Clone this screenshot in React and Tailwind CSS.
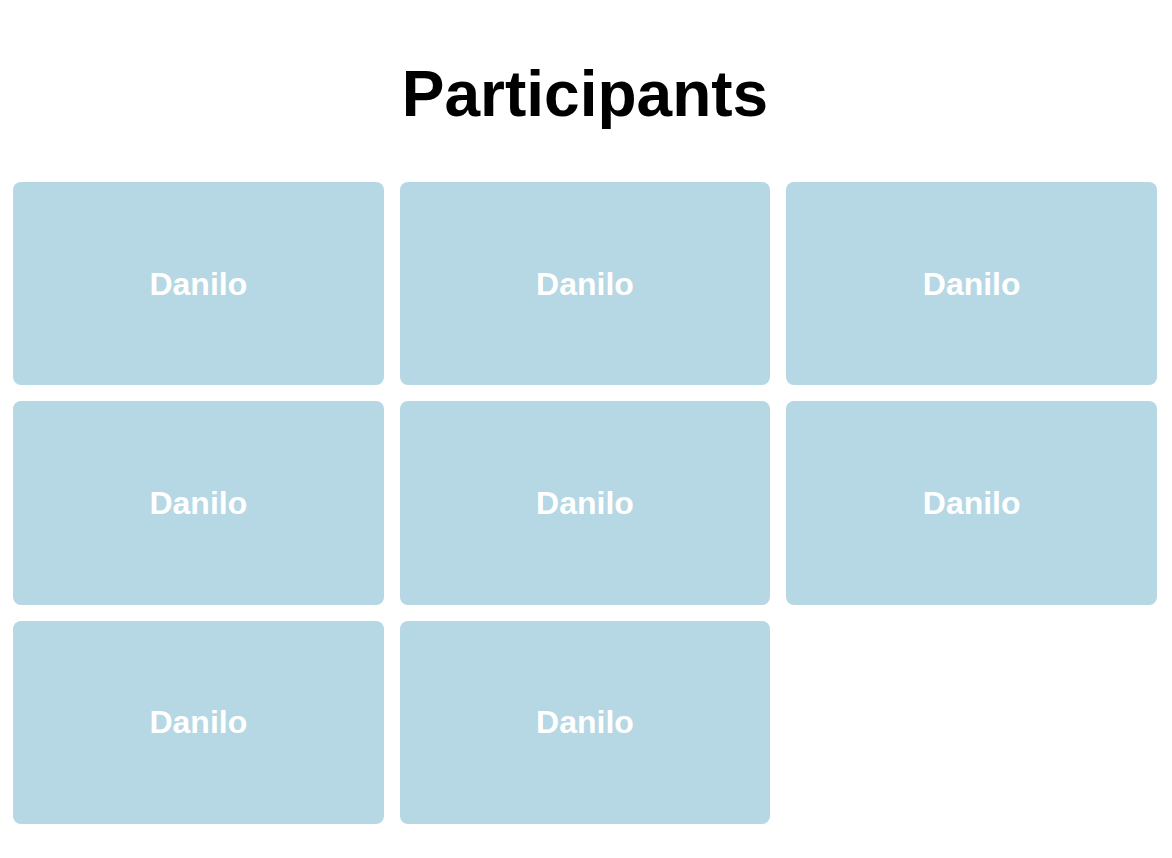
const participants = Array.from({ length: 8 }, (_, id) => ({ id, name: "Danilo" }));

function ParticipantCard({ name }) {
  return (
    <li className="flex items-center justify-center rounded-lg bg-[#b6d7e4] text-[32px] leading-9 font-bold text-white">
      {name}
    </li>
  );
}

export default function App() {
  return (
    <main className="flex min-h-screen flex-col pt-14 pr-[15px] pb-[34px] pl-[13px] font-['Liberation_Sans',Arial,sans-serif]">
      <h1 className="text-center text-[64px] leading-[76px] font-bold text-black">Participants</h1>
      <ul className="mt-[50px] grid flex-1 auto-rows-fr grid-cols-3 gap-4">
        {participants.map((participant) => (
          <ParticipantCard key={participant.id} name={participant.name} />
        ))}
      </ul>
    </main>
  );
}
